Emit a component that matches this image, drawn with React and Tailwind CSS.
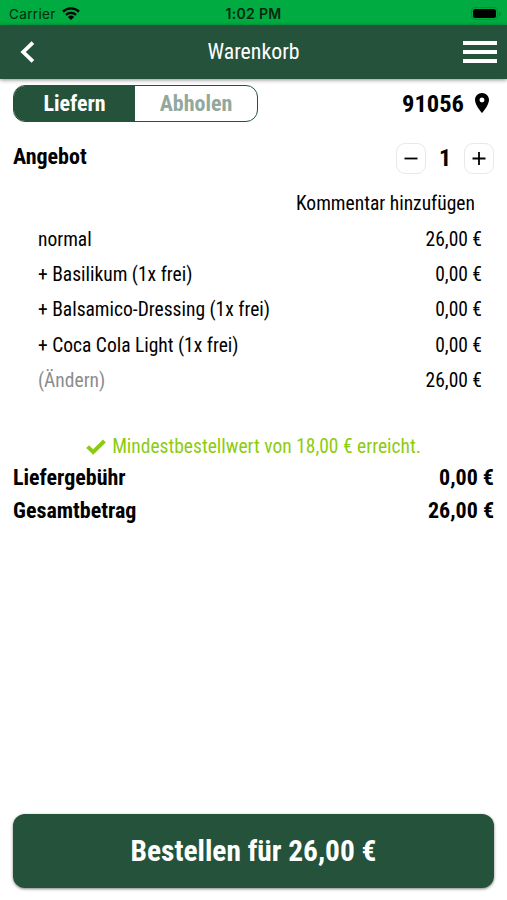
import { MdLocationOn } from "react-icons/md";

const POSITIONS = [
  { label: "normal", price: "26,00 €" },
  { label: "+ Basilikum (1x frei)", price: "0,00 €" },
  { label: "+ Balsamico-Dressing (1x frei)", price: "0,00 €" },
  { label: "+ Coca Cola Light (1x frei)", price: "0,00 €" },
  { label: "(Ändern)", price: "26,00 €", muted: true },
];

const TOTALS = [
  { label: "Liefergebühr", price: "0,00 €" },
  { label: "Gesamtbetrag", price: "26,00 €" },
];

function StatusBar() {
  return (
    <div className="grid h-[25px] grid-cols-3 items-center bg-[#00ab41] pt-[2px] font-['Inter',sans-serif] text-[13.5px] leading-none text-[#04290f]">
      <div className="flex items-center gap-[6px] pl-[9px]">
        <span className="pt-[2px] tracking-[0.35px]">Carrier</span>
        <svg viewBox="0 0 18 13" className="h-[13px] w-[18px] text-black" fill="none" stroke="currentColor" strokeWidth="2.3">
          <path d="M1 4.6a11.4 11.4 0 0 1 16 0" />
          <path d="M4 7.9a7.1 7.1 0 0 1 10 0" />
          <path d="M9 13 5.9 9.9a4.5 4.5 0 0 1 6.2 0z" fill="currentColor" stroke="none" />
        </svg>
      </div>
      <span className="pt-px text-center text-[14px] font-semibold tracking-[0.3px]">1:02 PM</span>
      <div className="flex items-center justify-end gap-px pr-[6px]">
        <div className="h-[13px] w-[27px] rounded-[4px] border border-[#058a36] p-px">
          <div className="h-full rounded-[2.5px] bg-black" />
        </div>
        <div className="h-1 w-[2px] rounded-r-full bg-[#058a36]" />
      </div>
    </div>
  );
}

function NavBar() {
  return (
    <header className="grid h-[54px] grid-cols-[80px_1fr_80px] items-center bg-[#25523b] text-white shadow-[0_1px_4px_rgba(0,0,0,0.45)]">
      <button className="pl-[20px]" aria-label="Zurück">
        <svg viewBox="0 0 15 22" className="h-[22px] w-[15px]" fill="none" stroke="currentColor" strokeWidth="3.8">
          <path d="M12.9 1.6 3.2 11l9.7 9.4" />
        </svg>
      </button>
      <h1 className="text-center text-[21.8px]">Warenkorb</h1>
      <button className="flex flex-col items-end gap-[5px] pr-[10px]" aria-label="Menü">
        <span className="h-1 w-[34px] bg-white" />
        <span className="h-1 w-[34px] bg-white" />
        <span className="h-1 w-[34px] bg-white" />
      </button>
    </header>
  );
}

function StepButton({ label, children }) {
  return (
    <button
      aria-label={label}
      className="flex h-[31px] w-[30px] items-center justify-center rounded-[9px] border border-[#e8e8e8]"
    >
      <svg viewBox="0 0 14 14" className="size-[14px]" fill="none" stroke="currentColor" strokeWidth="1.8">
        {children}
      </svg>
    </button>
  );
}

export default function App() {
  return (
    <div className="flex h-[900px] w-[507px] flex-col overflow-hidden bg-white font-['Roboto_Condensed','Roboto',sans-serif] text-black [font-stretch:75%]">
      <StatusBar />
      <NavBar />

      <main className="flex flex-1 flex-col px-[13px] pt-[6px]">
        {/* Delivery mode + postcode */}
        <div className="flex h-[37px] items-center justify-between">
          <div className="flex h-[37px] w-[245px] overflow-hidden rounded-[12px] border border-[#25523b] text-[22px] font-bold">
            <button className="w-[121px] bg-[#25523b] text-white">Liefern</button>
            <button className="flex-1 text-[#92a89d]">Abholen</button>
          </div>
          <div className="flex items-center gap-[6px] pt-px text-[24.5px] font-bold">
            <span>91056</span>
            <MdLocationOn className="mb-[2px] size-[24px]" />
          </div>
        </div>

        {/* Item headline */}
        <div className="mt-[21px] flex h-[31px] items-start justify-between">
          <h2 className="text-[22px] leading-[27px] font-bold">Angebot</h2>
          <div className="flex items-center">
            <StepButton label="Weniger">
              <path d="M.5 6.5h13" />
            </StepButton>
            <span className="w-[38px] text-center text-[24px] leading-[31px] font-bold">1</span>
            <StepButton label="Mehr">
              <path d="M.5 6.5h13M7 0v13" />
            </StepButton>
          </div>
        </div>

        <div className="mt-[12px] flex h-[35.5px] items-center justify-end pr-[19px] text-[19.55px]">
          <span>Kommentar hinzufügen</span>
        </div>

        <ul className="pr-[12px] pl-[25px] text-[19.5px]">
          {POSITIONS.map((pos) => (
            <li key={pos.label} className="flex h-[35.4px] items-center justify-between">
              <span className={pos.muted ? "text-[#8c8c8c]" : ""}>{pos.label}</span>
              <span>{pos.price}</span>
            </li>
          ))}
        </ul>

        {/* Minimum order value */}
        <div className="mt-[33.5px] flex h-[30px] items-center justify-center gap-[6px] text-[19.5px] text-[#8ccc10]">
          <svg viewBox="0 0 20 16" className="h-[16px] w-[20px]" fill="none" stroke="currentColor" strokeWidth="4">
            <path d="M1.6 7.6 7.2 13 18.4 2" />
          </svg>
          <span>Mindestbestellwert von 18,00 € erreicht.</span>
        </div>

        <dl className="-mt-px text-[22px] font-bold">
          {TOTALS.map((row) => (
            <div key={row.label} className="flex h-[33px] items-center justify-between">
              <dt>{row.label}</dt>
              <dd>{row.price}</dd>
            </div>
          ))}
        </dl>

        <button className="mt-auto mb-[12px] h-[74px] rounded-[12px] bg-[#25523b] pt-px text-[29.4px] font-bold text-white shadow-[0_1px_3px_rgba(0,0,0,0.5)]">
          Bestellen für 26,00 €
        </button>
      </main>
    </div>
  );
}
